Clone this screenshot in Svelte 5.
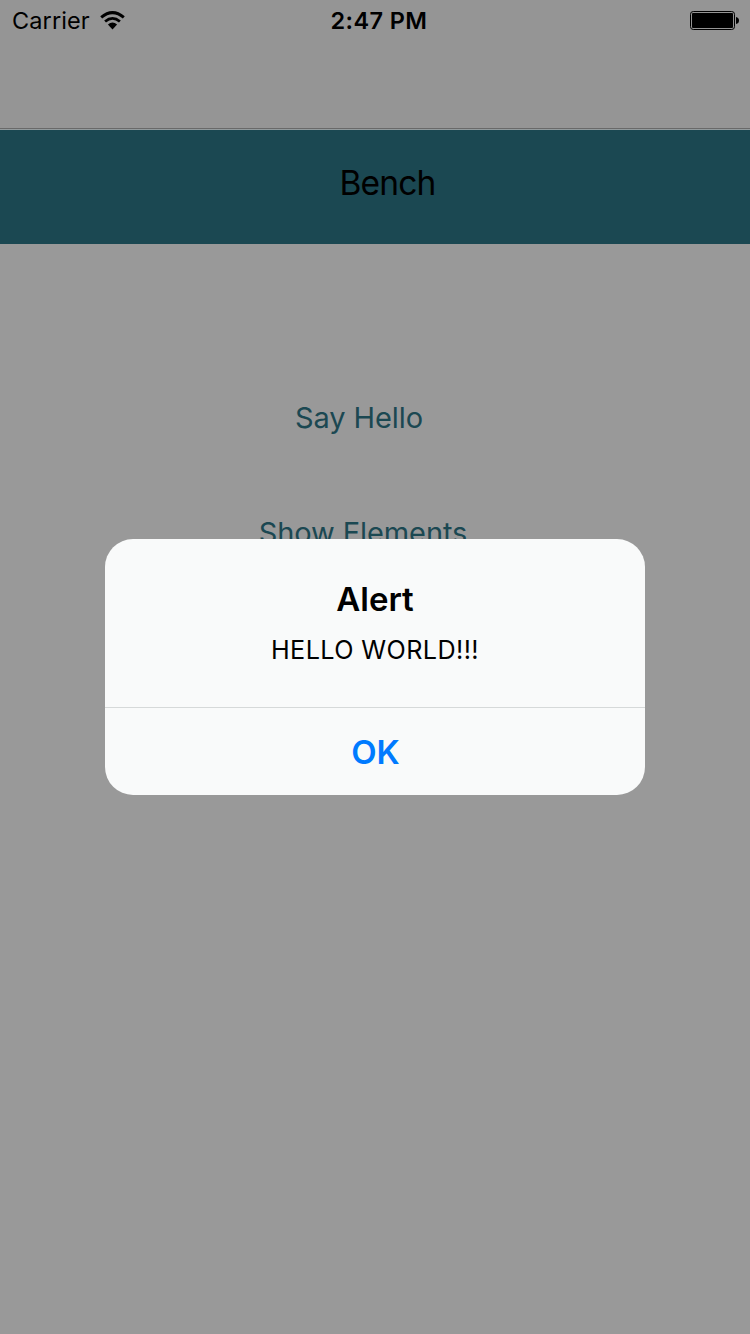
<script>
  const links = ['Say Hello', 'Show Elements'];
</script>

<main class="screen">
  <header class="navbar">
    <div class="status">
      <div class="side">
        <span class="carrier">Carrier</span>
        <svg class="wifi" width="25" height="20" viewBox="0 0 25 20" aria-hidden="true">
          <path d="M1.2 6.4 Q12.5 -3.2 23.8 6.4" fill="none" stroke="#000" stroke-width="3" />
          <path d="M5.1 10.5 Q12.5 4.3 19.9 10.5" fill="none" stroke="#000" stroke-width="2.8" />
          <path d="M7.9 13.6 Q12.5 9.2 17.1 13.6 L12.5 18.4 Z" />
        </svg>
      </div>
      <span class="time">2:47 PM</span>
      <div class="side end">
        <svg width="50" height="20" viewBox="0 0 50 20" aria-hidden="true">
          <rect x="0.5" y="0.5" width="44" height="18" rx="2.8" fill="none" stroke="#000" />
          <rect x="2" y="2" width="41" height="15" rx="1" />
          <path d="M46 6 Q49 6.5 49 9.5 Q49 12.5 46 13 Z" />
        </svg>
      </div>
    </div>
  </header>

  <div class="titlebar"><h1>Bench</h1></div>

  <div class="links">
    {#each links as link, i}
      <button class:wide={i === 1}><span>{link}</span></button>
    {/each}
  </div>

  <div class="overlay">
    <div class="alert" role="alertdialog" aria-labelledby="title">
      <div class="body">
        <h2 id="title">Alert</h2>
        <p>HELLO WORLD!!!</p>
      </div>
      <button class="ok">OK</button>
    </div>
  </div>
</main>

<style>
  :global(body) { background: #999; }
  .screen {
    position: relative;
    box-sizing: border-box;
    height: 1334px;
    overflow: hidden;
    background: #999;
    color: #000;
    font-family: Inter, "Liberation Sans", sans-serif;
  }
  h1, h2, p { margin: 0; font-weight: 400; }
  button { border: 0; padding: 0; background: none; font: inherit; }
  .navbar {
    box-sizing: border-box;
    height: 130px;
    background: #959595;
    border-bottom: 1px solid #929a9c;
    box-shadow: inset 0 -1px #696969;
  }
  .status {
    display: grid;
    grid-template-columns: 1fr auto 1fr;
    align-items: center;
    height: 42px;
    padding: 0 11px 0 12px;
  }
  .side { display: flex; align-items: center; }
  .side.end { justify-content: flex-end; }
  .side.end svg { margin-right: -1px; }
  .carrier { font-size: 23.5px; line-height: 40px; letter-spacing: 0.1px; }
  .wifi { margin-left: 10px; }
  .time { font-size: 23.5px; line-height: 40px; font-weight: 560; padding-left: 7px; letter-spacing: 0.4px; }
  .titlebar {
    height: 114px;
    box-sizing: border-box;
    padding: 33px 0 0 25px;
    background: #1b4852;
    text-align: center;
  }
  h1 { font-size: 33.5px; line-height: 41px; letter-spacing: -0.8px; }
  .links {
    display: flex;
    flex-direction: column;
    align-items: center;
    gap: 75px;
    padding: 154px 32px 0 0;
  }
  .links button { color: #1b4852; font-size: 29px; line-height: 40px; height: 40px; letter-spacing: -0.1px; }
  .links .wide { padding-left: 8px; }
  .overlay {
    position: absolute;
    inset: 0;
    display: grid;
    place-items: center;
  }
  .alert {
    width: 540px;
    height: 256px;
    display: flex;
    flex-direction: column;
    overflow: hidden;
    border-radius: 28px;
    background: #f9fafa;
    text-align: center;
  }
  .body { height: 168px; box-sizing: border-box; padding-top: 39px; }
  h2 { font-size: 33px; line-height: 42px; font-weight: 600; }
  p { font-size: 25.2px; line-height: 32px; margin-top: 14px; letter-spacing: 0.4px; }
  .ok {
    flex: 1;
    border-top: 1px solid #d6d9d9;
    color: #007aff;
    font-size: 33px;
    font-weight: 600;
    padding-left: 1px;
  }
</style>
